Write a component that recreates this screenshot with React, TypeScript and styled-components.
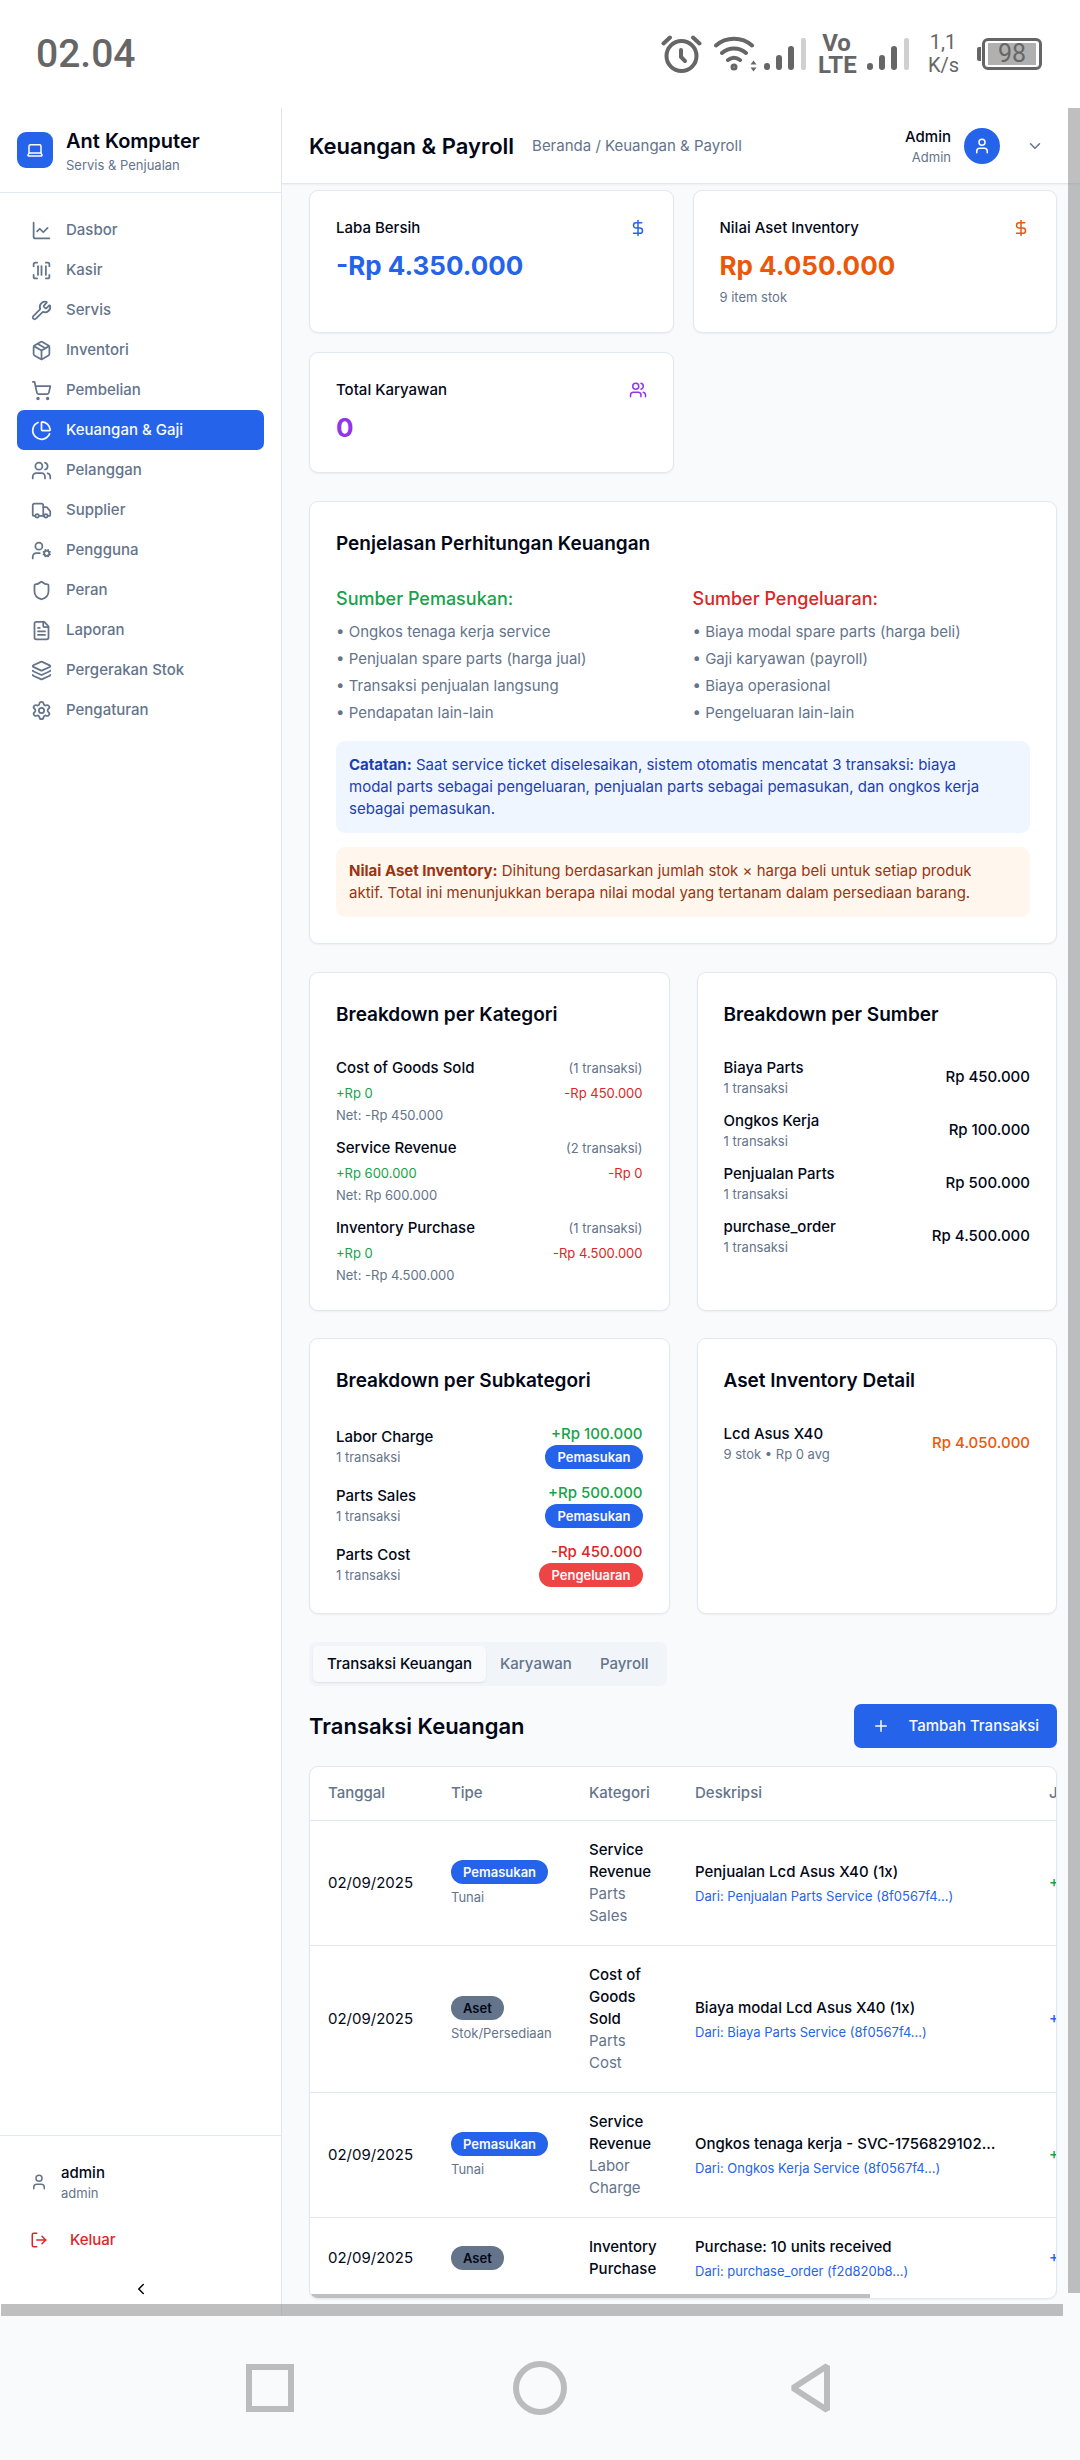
import React from "react";
import styled, { createGlobalStyle } from "styled-components";
import {
  ChartLine,
  ChartPie,
  ChevronDown,
  ChevronLeft,
  DollarSign,
  FileText,
  Layers,
  LogOut,
  Package,
  Plus,
  ScanBarcode,
  Settings,
  Shield,
  ShoppingCart,
  Truck,
  User,
  UserCog,
  Users,
  Wrench,
} from "lucide-react";

const c = {
  page: "#f9fafc",
  surface: "#ffffff",
  ink: "#020817",
  muted: "#64748b",
  line: "#e2e8f0",
  blue: "#2563eb",
  green: "#16a34a",
  red: "#dc2626",
  danger: "#ef4444",
  orange: "#ea580c",
  purple: "#9333ea",
  system: "#666666",
  thumb: "rgba(128, 128, 128, 0.5)",
};

const GlobalStyle = createGlobalStyle`
  *, *::before, *::after { box-sizing: border-box; }
  body {
    margin: 0;
    background: ${c.page};
    color: ${c.ink};
    font-family: Inter, "Liberation Sans", sans-serif;
    font-size: 15px;
    line-height: 22px;
  }
  h1, h2, h3, p, ul { margin: 0; padding: 0; }
  ul { list-style: none; }
  a { color: inherit; text-decoration: none; }
  button { font: inherit; color: inherit; border: 0; background: none; padding: 0; cursor: pointer; }
  svg { display: block; flex-shrink: 0; }
`;

/* ---------- shell ---------- */

const Screen = styled.div`
  min-height: 100vh;
  display: flex;
  flex-direction: column;
`;

const StatusBar = styled.div`
  height: 108px;
  padding: 0 38px 0 36px;
  display: flex;
  align-items: center;
  justify-content: space-between;
  background: ${c.surface};
  color: ${c.system};
  font-family: Roboto, sans-serif;
`;

const Clock = styled.span`
  font-size: 39px;
  line-height: 48px;
  font-weight: 500;
`;

const StatusIcons = styled.div`
  display: flex;
  align-items: center;
  gap: 12px;
`;

const Wireless = styled.span`
  display: flex;
  align-items: center;
  gap: 7px;
`;

const VoLte = styled.span`
  width: 37px;
  font-size: 24px;
  line-height: 22px;
  font-weight: 700;
  text-align: center;
`;

const Speed = styled.span`
  width: 30px;
  margin: 0 7px;
  font-size: 20px;
  line-height: 23px;
  text-align: center;
`;

const Battery = styled.span`
  display: flex;
  align-items: center;
  gap: 1px;
  &::before {
    content: "";
    width: 4px;
    height: 14px;
    border-radius: 2px 0 0 2px;
    background: ${c.system};
  }
`;

const BatteryBody = styled.span`
  width: 60px;
  height: 32px;
  padding: 2px 3px;
  border: 3px solid ${c.system};
  border-radius: 6px;
`;

const BatteryLevel = styled.span`
  height: 22px;
  display: flex;
  align-items: center;
  justify-content: center;
  background: #b0b0b0;
  font-size: 25px;
  line-height: 22px;
`;

const Body = styled.div`
  position: relative;
  flex: 1;
  display: flex;
`;

const PageScrollX = styled.div`
  position: absolute;
  left: 1px;
  right: 17px;
  bottom: 0;
  height: 12px;
  background: ${c.thumb};
`;

const PageScrollY = styled.div`
  position: absolute;
  top: 0;
  right: 0;
  bottom: 23px;
  width: 12px;
  background: ${c.thumb};
  z-index: 2;
`;

const SystemNav = styled.nav`
  height: 144px;
  display: grid;
  grid-template-columns: repeat(3, 270px);
  justify-content: center;
  align-items: center;
`;

const SystemButton = styled.button`
  display: flex;
  justify-content: center;
`;

/* ---------- sidebar ---------- */

const Sidebar = styled.aside`
  width: 282px;
  flex-shrink: 0;
  display: flex;
  flex-direction: column;
  background: ${c.surface};
  border-right: 1px solid ${c.line};
`;

const Brand = styled.div`
  display: flex;
  align-items: center;
  gap: 13px;
  height: 85px;
  padding: 0 17px;
  border-bottom: 1px solid ${c.line};
`;

const BrandMark = styled.span`
  width: 36px;
  height: 36px;
  display: flex;
  align-items: center;
  justify-content: center;
  border-radius: 9px;
  background: ${c.blue};
  color: #fff;
`;

const BrandName = styled.h2`
  font-size: 20px;
  line-height: 30px;
  font-weight: 600;
`;

const Small = styled.p<{ $color?: string }>`
  font-size: 13px;
  line-height: 18px;
  color: ${(p) => p.$color || c.muted};
`;

const Menu = styled.nav`
  flex: 1;
  padding: 17px;
`;

const MenuLink = styled.a<{ $active?: boolean }>`
  display: flex;
  align-items: center;
  gap: 14px;
  height: 40px;
  padding: 0 14px;
  border-radius: 7px;
  font-weight: 500;
  background: ${(p) => (p.$active ? c.blue : "transparent")};
  color: ${(p) => (p.$active ? "#f8fafc" : c.muted)};
`;

const SidebarFoot = styled.div`
  padding: 13px 17px 7px;
  border-top: 1px solid ${c.line};
`;

const Account = styled.div`
  display: flex;
  align-items: center;
  gap: 13px;
  height: 66px;
  padding: 0 13px;
  color: ${c.muted};
`;

const AccountName = styled.p`
  color: ${c.ink};
  font-weight: 500;
`;

const LogoutButton = styled.button`
  display: flex;
  align-items: center;
  gap: 22px;
  width: 100%;
  height: 40px;
  margin: 5px 0 9px;
  padding: 0 13px;
  color: ${c.red};
  font-weight: 500;
`;

const CollapseButton = styled.button`
  display: flex;
  align-items: center;
  justify-content: center;
  width: 100%;
  height: 40px;
`;

/* ---------- main column ---------- */

const Column = styled.div`
  flex: 1;
  min-width: 0;
`;

const TopBar = styled.header`
  display: flex;
  align-items: center;
  height: 76px;
  padding: 0 36px 0 27px;
  background: ${c.surface};
  border-bottom: 1px solid ${c.line};
  box-shadow: 0 1px 2px rgba(0, 0, 0, 0.05);
`;

const PageTitle = styled.h1`
  font-size: 22px;
  line-height: 30px;
  font-weight: 600;
`;

const Crumbs = styled.nav`
  flex: 1;
  margin-left: 18px;
  color: ${c.muted};
`;

const Profile = styled.button`
  display: flex;
  align-items: center;
  gap: 13px;
  text-align: right;
  color: ${c.muted};
`;

const ProfileName = styled.span`
  display: block;
  color: ${c.ink};
  font-weight: 500;
`;

const ProfileRole = styled.span`
  display: block;
  font-size: 13px;
  line-height: 18px;
`;

const Avatar = styled.span`
  width: 36px;
  height: 36px;
  margin-right: 13px;
  display: flex;
  align-items: center;
  justify-content: center;
  border-radius: 50%;
  background: ${c.blue};
  color: #fff;
`;

const Main = styled.main`
  display: flex;
  flex-direction: column;
  gap: 28px;
  padding: 6px 23px 15px 27px;
`;

const Grid = styled.div<{ $gap: number }>`
  display: grid;
  grid-template-columns: 1fr 1fr;
  gap: ${(p) => p.$gap}px;
`;

const Card = styled.section`
  padding: 26px;
  background: ${c.surface};
  border: 1px solid ${c.line};
  border-radius: 9px;
  box-shadow: 0 1px 2px rgba(0, 0, 0, 0.05);
`;

const StatHead = styled.div<{ $color: string }>`
  display: flex;
  align-items: center;
  justify-content: space-between;
  margin-bottom: 9px;
  svg { color: ${(p) => p.$color}; }
`;

const StatLabel = styled.h3`
  font-size: 15px;
  line-height: 22px;
  font-weight: 500;
`;

const StatValue = styled.p<{ $color: string }>`
  font-size: 26px;
  line-height: 36px;
  font-weight: 700;
  color: ${(p) => p.$color};
`;

const StatNote = styled(Small)`
  margin-top: 4px;
`;

const CardTitle = styled.h3`
  margin-bottom: 26px;
  font-size: 19px;
  line-height: 32px;
  font-weight: 600;
`;

const SourceTitle = styled.h3<{ $color: string }>`
  margin-bottom: 9px;
  font-size: 18px;
  line-height: 26px;
  font-weight: 500;
  color: ${(p) => p.$color};
`;

const SourceList = styled.ul`
  display: grid;
  gap: 5px;
  color: ${c.muted};
`;

const Notes = styled.div`
  display: grid;
  gap: 14px;
  margin-top: 17px;
`;

const Note = styled.p<{ $bg: string; $color: string }>`
  padding: 13px 33px 13px 13px;
  border-radius: 9px;
  background: ${(p) => p.$bg};
  color: ${(p) => p.$color};
`;

const Stack = styled.div<{ $gap: number }>`
  display: grid;
  align-content: start;
  gap: ${(p) => p.$gap}px;
`;

const Row = styled.div`
  display: flex;
  align-items: center;
  justify-content: space-between;
`;

const CategoryRow = styled(Row)`
  margin: 5px 0 4px;
`;

const Name = styled.p<{ $color?: string }>`
  font-weight: 500;
  color: ${(p) => p.$color || c.ink};
`;

const RightCell = styled.div`
  display: flex;
  flex-direction: column;
  align-items: flex-end;
`;

const badgeTone = {
  income: { bg: c.blue, fg: "#f8fafc" },
  expense: { bg: c.danger, fg: "#f8fafc" },
  asset: { bg: c.muted, fg: c.ink },
};

type Tone = keyof typeof badgeTone;

const Badge = styled.span<{ $tone: Tone }>`
  display: flex;
  align-items: center;
  width: fit-content;
  height: 24px;
  padding: 0 12px;
  border-radius: 12px;
  font-size: 13px;
  line-height: 18px;
  font-weight: 600;
  background: ${(p) => badgeTone[p.$tone].bg};
  color: ${(p) => badgeTone[p.$tone].fg};
`;

/* ---------- transactions ---------- */

const Transactions = styled.section`
  display: flex;
  flex-direction: column;
  gap: 18px;
`;

const Tabs = styled.div`
  display: flex;
  width: fit-content;
  height: 44px;
  padding: 4px;
  border-radius: 7px;
  background: #f1f5f9;
`;

const Tab = styled.button<{ $active?: boolean }>`
  padding: 0 14px;
  border-radius: 5px;
  font-weight: 500;
  color: ${(p) => (p.$active ? c.ink : c.muted)};
  background: ${(p) => (p.$active ? c.page : "transparent")};
  box-shadow: ${(p) => (p.$active ? "0 1px 2px rgba(0, 0, 0, 0.08)" : "none")};
`;

const SectionTitle = styled.h2`
  font-size: 22px;
  line-height: 30px;
  font-weight: 600;
`;

const AddButton = styled.button`
  display: flex;
  align-items: center;
  gap: 18px;
  height: 44px;
  padding: 0 18px;
  border-radius: 7px;
  background: ${c.blue};
  color: #f8fafc;
  font-weight: 500;
`;

const TableFrame = styled.div`
  position: relative;
  overflow: hidden;
  background: ${c.surface};
  border: 1px solid ${c.line};
  border-radius: 9px;
  box-shadow: 0 1px 2px rgba(0, 0, 0, 0.05);
`;

const TableScroll = styled.div`
  overflow-x: auto;
  scrollbar-width: none;
`;

const TableThumb = styled.div`
  position: absolute;
  left: 0;
  bottom: 0;
  width: 75%;
  height: 4px;
  background: ${c.thumb};
`;

const Table = styled.table`
  width: 133%;
  min-width: 996px;
  table-layout: fixed;
  border-collapse: collapse;
  thead tr, tbody tr:not(:last-child) { border-bottom: 1px solid ${c.line}; }
`;

const Th = styled.th<{ $width?: number }>`
  width: ${(p) => (p.$width ? p.$width + "px" : "auto")};
  height: 53px;
  padding: 0 18px;
  text-align: left;
  font-weight: 500;
  color: ${c.muted};
`;

const Td = styled.td`
  padding: 18px;
  vertical-align: middle;
`;

const CellNote = styled(Small)`
  margin-top: 4px;
`;

const Muted = styled.p`
  color: ${c.muted};
`;

const CategoryCell = styled.div`
  width: 70px;
`;

/* ---------- drawings ---------- */

const AlarmIcon = () => (
  <svg width="41" height="40" viewBox="0 0 41 40" fill="none" stroke={c.system} strokeWidth="4" strokeLinecap="round">
    <circle cx="20.5" cy="22" r="15" />
    <path d="M20 16v7l4 4" />
    <path d="M2.500 9.500 9 3.500M38.500 9.500 32 3.500" />
  </svg>
);

const WifiIcon = () => (
  <svg width="43" height="36" viewBox="0 0 43 36" fill="none" stroke={c.system} strokeWidth="4" strokeLinecap="round">
    <path d="M2 9.500C12 0.500 28 0.500 38 9.500M8 17c7-6 17-6 24 0M14 24c4-3 8-3 12 0" />
    <circle cx="20" cy="31" r="1.500" />
    <path d="M36.500 28.500 39.500 24.500 42.500 28.500zM36.500 31.500 39.500 35.500 42.500 31.500z" fill={c.system} stroke="none" />
  </svg>
);

const SignalIcon = () => (
  <svg width="42" height="34" viewBox="0 0 42 34" fill={c.system}>
    <rect x="0" y="26" width="6" height="7" rx="3" />
    <rect x="12" y="18" width="6" height="15" rx="3" />
    <rect x="24" y="9" width="6" height="24" rx="3" />
    <rect x="37" y="1" width="5" height="32" rx="2" fill="#d0d0d0" />
  </svg>
);

const LaptopIcon = () => (
  <svg width="18" height="18" viewBox="0 0 24 24" fill="none" stroke="currentColor" strokeWidth="2" strokeLinecap="round" strokeLinejoin="round">
    <path d="M20 16V7a2 2 0 0 0-2-2H6a2 2 0 0 0-2 2v9m16 0H4m16 0 1.280 2.550a1 1 0 0 1-.9 1.450H3.620a1 1 0 0 1-.9-1.450L4 16" />
  </svg>
);

/* ---------- data ---------- */

const menu = [
  { label: "Dasbor", icon: ChartLine },
  { label: "Kasir", icon: ScanBarcode },
  { label: "Servis", icon: Wrench },
  { label: "Inventori", icon: Package },
  { label: "Pembelian", icon: ShoppingCart },
  { label: "Keuangan & Gaji", icon: ChartPie, active: true },
  { label: "Pelanggan", icon: Users },
  { label: "Supplier", icon: Truck },
  { label: "Pengguna", icon: UserCog },
  { label: "Peran", icon: Shield },
  { label: "Laporan", icon: FileText },
  { label: "Pergerakan Stok", icon: Layers },
  { label: "Pengaturan", icon: Settings },
];

const stats = [
  { label: "Laba Bersih", value: "-Rp 4.350.000", color: c.blue, icon: DollarSign },
  { label: "Nilai Aset Inventory", value: "Rp 4.050.000", color: c.orange, icon: DollarSign, note: "9 item stok" },
  { label: "Total Karyawan", value: "0", color: c.purple, icon: Users },
];

const sources = [
  {
    title: "Sumber Pemasukan:",
    color: c.green,
    items: ["Ongkos tenaga kerja service", "Penjualan spare parts (harga jual)", "Transaksi penjualan langsung", "Pendapatan lain-lain"],
  },
  {
    title: "Sumber Pengeluaran:",
    color: c.red,
    items: ["Biaya modal spare parts (harga beli)", "Gaji karyawan (payroll)", "Biaya operasional", "Pengeluaran lain-lain"],
  },
];

const categories = [
  { name: "Cost of Goods Sold", count: 1, income: "+Rp 0", expense: "-Rp 450.000", net: "-Rp 450.000" },
  { name: "Service Revenue", count: 2, income: "+Rp 600.000", expense: "-Rp 0", net: "Rp 600.000" },
  { name: "Inventory Purchase", count: 1, income: "+Rp 0", expense: "-Rp 4.500.000", net: "-Rp 4.500.000" },
];

const origins = [
  { name: "Biaya Parts", amount: "Rp 450.000" },
  { name: "Ongkos Kerja", amount: "Rp 100.000" },
  { name: "Penjualan Parts", amount: "Rp 500.000" },
  { name: "purchase_order", amount: "Rp 4.500.000" },
];

const subcategories: { name: string; amount: string; tone: Tone; type: string }[] = [
  { name: "Labor Charge", amount: "+Rp 100.000", tone: "income", type: "Pemasukan" },
  { name: "Parts Sales", amount: "+Rp 500.000", tone: "income", type: "Pemasukan" },
  { name: "Parts Cost", amount: "-Rp 450.000", tone: "expense", type: "Pengeluaran" },
];

const transactions: {
  tone: Tone;
  type: string;
  method?: string;
  category: string;
  sub?: string;
  text: string;
  from: string;
  amount: string;
}[] = [
  { tone: "income", type: "Pemasukan", method: "Tunai", category: "Service Revenue", sub: "Parts Sales", text: "Penjualan Lcd Asus X40 (1x)", from: "Penjualan Parts Service (8f0567f4...)", amount: "+Rp 500.000" },
  { tone: "asset", type: "Aset", method: "Stok/Persediaan", category: "Cost of Goods Sold", sub: "Parts Cost", text: "Biaya modal Lcd Asus X40 (1x)", from: "Biaya Parts Service (8f0567f4...)", amount: "+Rp 450.000" },
  { tone: "income", type: "Pemasukan", method: "Tunai", category: "Service Revenue", sub: "Labor Charge", text: "Ongkos tenaga kerja - SVC-1756829102…", from: "Ongkos Kerja Service (8f0567f4...)", amount: "+Rp 100.000" },
  { tone: "asset", type: "Aset", category: "Inventory Purchase", text: "Purchase: 10 units received", from: "purchase_order (f2d820b8...)", amount: "+Rp 4.500.000" },
];

/* ---------- app ---------- */

export default function App() {
  return (
    <Screen>
      <GlobalStyle />
      <StatusBar>
        <Clock>02.04</Clock>
        <StatusIcons>
          <AlarmIcon />
          <Wireless>
            <WifiIcon />
            <SignalIcon />
          </Wireless>
          <VoLte>Vo LTE</VoLte>
          <SignalIcon />
          <Speed>1,1 K/s</Speed>
          <Battery>
            <BatteryBody>
              <BatteryLevel>98</BatteryLevel>
            </BatteryBody>
          </Battery>
        </StatusIcons>
      </StatusBar>

      <Body>
        <Sidebar>
          <Brand>
            <BrandMark>
              <LaptopIcon />
            </BrandMark>
            <div>
              <BrandName>Ant Komputer</BrandName>
              <Small>Servis &amp; Penjualan</Small>
            </div>
          </Brand>
          <Menu>
            {menu.map(({ label, icon: Icon, active }) => (
              <MenuLink key={label} href="#" $active={active}>
                <Icon size={21} />
                {label}
              </MenuLink>
            ))}
          </Menu>
          <SidebarFoot>
            <Account>
              <User size={18} />
              <div>
                <AccountName>admin</AccountName>
                <Small>admin</Small>
              </div>
            </Account>
            <LogoutButton>
              <LogOut size={18} />
              Keluar
            </LogoutButton>
            <CollapseButton aria-label="Ciutkan menu">
              <ChevronLeft size={18} />
            </CollapseButton>
          </SidebarFoot>
        </Sidebar>

        <Column>
          <TopBar>
            <PageTitle>Keuangan &amp; Payroll</PageTitle>
            <Crumbs>Beranda / Keuangan &amp; Payroll</Crumbs>
            <Profile>
              <span>
                <ProfileName>Admin</ProfileName>
                <ProfileRole>Admin</ProfileRole>
              </span>
              <Avatar>
                <User size={18} />
              </Avatar>
              <ChevronDown size={18} />
            </Profile>
          </TopBar>

          <Main>
            <Grid $gap={19}>
              {stats.map(({ label, value, color, icon: Icon, note }) => (
                <Card key={label}>
                  <StatHead $color={color}>
                    <StatLabel>{label}</StatLabel>
                    <Icon size={18} />
                  </StatHead>
                  <StatValue $color={color}>{value}</StatValue>
                  {note && <StatNote>{note}</StatNote>}
                </Card>
              ))}
            </Grid>

            <Card>
              <CardTitle>Penjelasan Perhitungan Keuangan</CardTitle>
              <Grid $gap={19}>
                {sources.map((s) => (
                  <div key={s.title}>
                    <SourceTitle $color={s.color}>{s.title}</SourceTitle>
                    <SourceList>
                      {s.items.map((item) => (
                        <li key={item}>• {item}</li>
                      ))}
                    </SourceList>
                  </div>
                ))}
              </Grid>
              <Notes>
                <Note $bg="#eff6ff" $color="#1e40af">
                  <strong>Catatan:</strong> Saat service ticket diselesaikan, sistem otomatis mencatat 3 transaksi: biaya
                  modal parts sebagai pengeluaran, penjualan parts sebagai pemasukan, dan ongkos kerja sebagai pemasukan.
                </Note>
                <Note $bg="#fff7ed" $color="#9a3412">
                  <strong>Nilai Aset Inventory:</strong> Dihitung berdasarkan jumlah stok × harga beli untuk setiap produk
                  aktif. Total ini menunjukkan berapa nilai modal yang tertanam dalam persediaan barang.
                </Note>
              </Notes>
            </Card>

            <Grid $gap={27}>
              <Card>
                <CardTitle>Breakdown per Kategori</CardTitle>
                <Stack $gap={13}>
                  {categories.map((k) => (
                    <div key={k.name}>
                      <Row>
                        <Name>{k.name}</Name>
                        <Small>({k.count} transaksi)</Small>
                      </Row>
                      <CategoryRow>
                        <Small $color={c.green}>{k.income}</Small>
                        <Small $color={c.red}>{k.expense}</Small>
                      </CategoryRow>
                      <Small>Net: {k.net}</Small>
                    </div>
                  ))}
                </Stack>
              </Card>
              <Card>
                <CardTitle>Breakdown per Sumber</CardTitle>
                <Stack $gap={13}>
                  {origins.map((o) => (
                    <Row key={o.name}>
                      <div>
                        <Name>{o.name}</Name>
                        <Small>1 transaksi</Small>
                      </div>
                      <Name>{o.amount}</Name>
                    </Row>
                  ))}
                </Stack>
              </Card>
              <Card>
                <CardTitle>Breakdown per Subkategori</CardTitle>
                <Stack $gap={13}>
                  {subcategories.map((s) => (
                    <Row key={s.name}>
                      <div>
                        <Name>{s.name}</Name>
                        <Small>1 transaksi</Small>
                      </div>
                      <RightCell>
                        <Name $color={s.tone === "income" ? c.green : c.red}>{s.amount}</Name>
                        <Badge $tone={s.tone}>{s.type}</Badge>
                      </RightCell>
                    </Row>
                  ))}
                </Stack>
              </Card>
              <Card>
                <CardTitle>Aset Inventory Detail</CardTitle>
                <Row>
                  <div>
                    <Name>Lcd Asus X40</Name>
                    <Small>9 stok • Rp 0 avg</Small>
                  </div>
                  <Name $color={c.orange}>Rp 4.050.000</Name>
                </Row>
              </Card>
            </Grid>

            <Transactions>
              <Tabs role="tablist">
                <Tab role="tab" aria-selected="true" $active>
                  Transaksi Keuangan
                </Tab>
                <Tab role="tab" aria-selected="false">Karyawan</Tab>
                <Tab role="tab" aria-selected="false">Payroll</Tab>
              </Tabs>
              <Row>
                <SectionTitle>Transaksi Keuangan</SectionTitle>
                <AddButton>
                  <Plus size={18} />
                  Tambah Transaksi
                </AddButton>
              </Row>
              <TableFrame>
                <TableScroll>
                  <Table>
                    <thead>
                      <tr>
                        <Th $width={123}>Tanggal</Th>
                        <Th $width={138}>Tipe</Th>
                        <Th $width={106}>Kategori</Th>
                        <Th $width={354}>Deskripsi</Th>
                        <Th>Jumlah</Th>
                      </tr>
                    </thead>
                    <tbody>
                      {transactions.map((t) => (
                        <tr key={t.text}>
                          <Td>02/09/2025</Td>
                          <Td>
                            <Badge $tone={t.tone}>{t.type}</Badge>
                            {t.method && <CellNote>{t.method}</CellNote>}
                          </Td>
                          <Td>
                            <CategoryCell>
                              <Name>{t.category}</Name>
                              {t.sub && <Muted>{t.sub}</Muted>}
                            </CategoryCell>
                          </Td>
                          <Td>
                            <Name>{t.text}</Name>
                            <CellNote $color={c.blue}>Dari: {t.from}</CellNote>
                          </Td>
                          <Td>
                            <Name $color={t.tone === "income" ? c.green : c.blue}>{t.amount}</Name>
                          </Td>
                        </tr>
                      ))}
                    </tbody>
                  </Table>
                </TableScroll>
                <TableThumb />
              </TableFrame>
            </Transactions>
          </Main>
        </Column>
        <PageScrollX />
        <PageScrollY />
      </Body>

      <SystemNav aria-label="Navigasi sistem">
        <SystemButton aria-label="Aplikasi terbaru">
          <svg width="54" height="54" viewBox="0 0 54 54" fill="none" stroke="#bbbcbe" strokeWidth="6">
            <rect x="6" y="6" width="42" height="42" />
          </svg>
        </SystemButton>
        <SystemButton aria-label="Beranda">
          <svg width="54" height="54" viewBox="0 0 54 54" fill="none" stroke="#bbbcbe" strokeWidth="6">
            <circle cx="27" cy="27" r="24" />
          </svg>
        </SystemButton>
        <SystemButton aria-label="Kembali">
          <svg width="54" height="54" viewBox="0 0 54 54" fill="none" stroke="#bbbcbe" strokeWidth="6" strokeLinejoin="bevel">
            <path d="M44 5v44L10 27z" />
          </svg>
        </SystemButton>
      </SystemNav>
    </Screen>
  );
}
